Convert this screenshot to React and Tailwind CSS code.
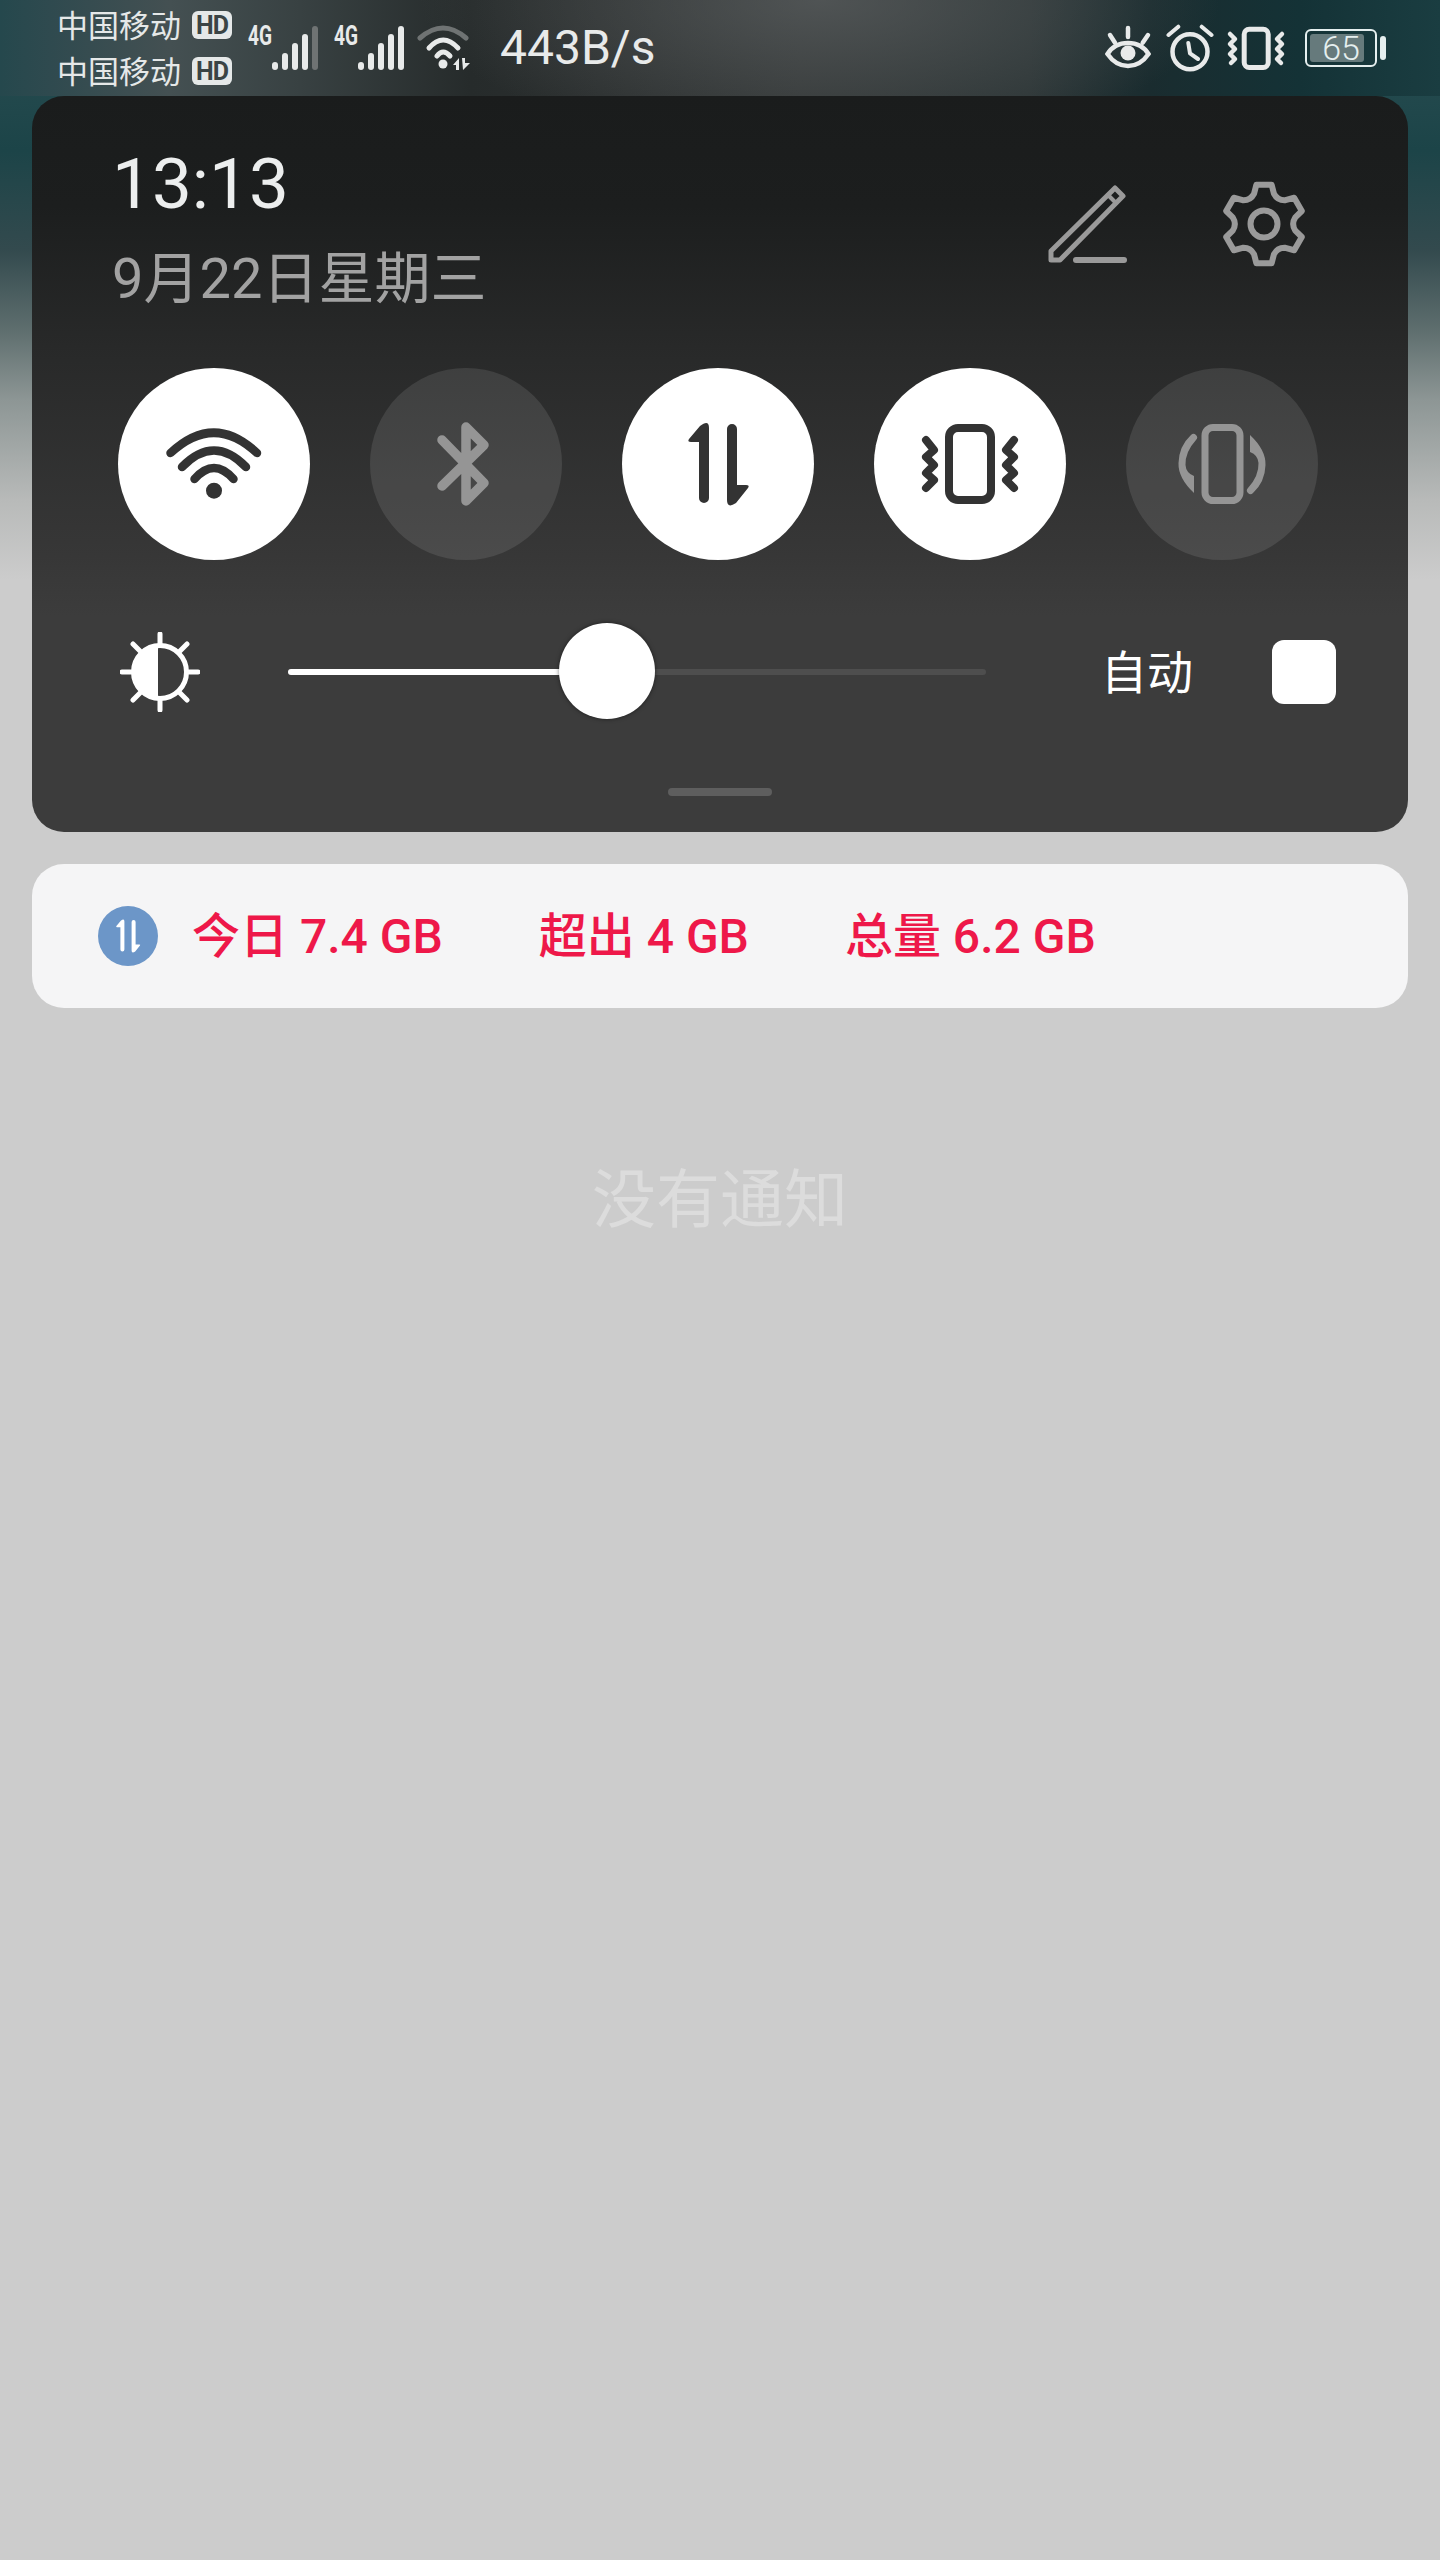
// Notification shade: status bar, quick settings panel, data usage card
const INK = '#333333'
const DIM = '#959595'
const BAR = '#e8eaea'

const SIGNAL_BARS = [[27, 38], [37, 29], [47, 19], [57, 10], [67, 2]]

function SignalIcon({ lastDim }) {
  return (
    <svg width="72" height="48" viewBox="0 0 72 48" className="shrink-0 overflow-visible">
      <text x="0" y="21" fontSize="28" fontWeight="700" fill={BAR} textLength="24" lengthAdjust="spacingAndGlyphs">4G</text>
      {SIGNAL_BARS.map(([x, top], i) => (
        <line
          key={x}
          x1={x}
          x2={x}
          y1={top + 3}
          y2="43"
          stroke={i === 4 && lastDim ? '#6f7373' : BAR}
          strokeWidth="6"
          strokeLinecap="round"
        />
      ))}
    </svg>
  )
}

function WifiSmall() {
  return (
    <svg width="56" height="48" viewBox="0 0 56 48" fill="none" strokeLinecap="round" strokeWidth="5" className="ml-[11px] shrink-0">
      <path d="M3 14 Q26 -6 49 14" stroke="#6f7373" />
      <path d="M12 24 Q26 8 41 24" stroke={BAR} />
      <path d="M20 32 Q26 24 33 32" stroke={BAR} />
      <circle cx="26" cy="40" r="4.5" fill={BAR} />
      <path d="M36 41 L42 34 V46 H39 V41 Z" fill={BAR} />
      <path d="M45 34 H48 V39 H53 L46 46 Z" fill={BAR} />
    </svg>
  )
}

function EyeIcon() {
  return (
    <svg width="52" height="48" viewBox="0 0 52 48" fill="none" stroke={BAR} strokeWidth="4.5" strokeLinecap="round" className="shrink-0">
      <path d="M5.5 30 C11 21 20 19 26 19 C32 19 41 21 46.5 30 C41 38 33 42 26 42 C19 42 11 38 5.5 30 Z" />
      <circle cx="26" cy="29" r="7.5" fill={BAR} stroke="none" />
      <path d="M26 4 V13 M8 11 L13 18.7 M46 11 L40.7 18.7" />
    </svg>
  )
}

function AlarmIcon() {
  return (
    <svg width="48" height="48" viewBox="0 0 48 48" fill="none" stroke={BAR} strokeWidth="4.5" strokeLinecap="round" strokeLinejoin="round" className="ml-3 shrink-0">
      <circle cx="24" cy="27.7" r="17.5" />
      <path d="M22.3 19 L24 29.3 L32 35 M2.5 11 L12.3 2.7 M45.5 11 L35.7 2.7" strokeWidth="4" />
    </svg>
  )
}

function VibrateSmall() {
  return (
    <svg width="60" height="48" viewBox="0 0 60 48" fill="none" stroke={BAR} strokeLinecap="round" strokeLinejoin="round" className="ml-3 shrink-0">
      <rect x="18.2" y="5.2" width="24" height="38.3" rx="5" strokeWidth="5" />
      <path d="M4 10 L9 15 L4 20 L9 25 L4 30 L9 35 L5 39" strokeWidth="4.5" />
      <path d="M56 10 L51 15 L56 20 L51 25 L56 30 L51 35 L55 39" strokeWidth="4.5" />
    </svg>
  )
}

function Battery() {
  return (
    <div className="ml-[19px] flex items-center">
      <div className="relative flex h-[38px] w-[72px] items-center justify-center rounded-[6px] border-2 border-[#e5efef]">
        <div className="absolute left-[3px] top-[3px] h-[28px] w-[54px] rounded-[3px] bg-[#667a7c]" />
        <span className="relative text-[34px] font-light leading-none text-[#e5efef]">65</span>
      </div>
      <div className="ml-[3px] h-[24px] w-[6px] rounded-[3px] bg-[#e5efef]" />
    </div>
  )
}

function HdLine({ children }) {
  return (
    <div className="flex h-[46px] items-center text-[31px] leading-none text-[#e5e8e8]">
      <span className="mt-[3px] w-[135px]">{children}</span>
      <span className="flex h-[28px] w-[40px] items-center justify-center rounded-[6px] bg-[#e5e8e8] text-[25px] font-bold tracking-[-1px] text-[#3a4445]">HD</span>
    </div>
  )
}

function StatusBar() {
  return (
    <div className="flex h-[96px] items-center bg-[radial-gradient(ellipse_400px_150px_at_820px_0,rgba(92,96,97,0.7)_0,rgba(92,96,97,0)_100%),linear-gradient(to_right,#25484d_0,#2f4a4f_50px,#445052_170px,#384142_300px,#262b2b_470px,#2b2f2f_600px,#323636_800px,#2c3536_1030px,#1a2c2f_1150px,#143236_1300px,#1a3d41_1440px)] pl-[57px] pr-[54px]">
      <div className="w-[176px] shrink-0">
        <HdLine>中国移动</HdLine>
        <HdLine>中国移动</HdLine>
      </div>
      <div className="ml-[15px]"><SignalIcon lastDim /></div>
      <div className="ml-[14px]"><SignalIcon /></div>
      <WifiSmall />
      <span className="ml-[27px] text-[48px] leading-none text-[#e8eaea]">443B/s</span>
      <div className="ml-auto flex items-center">
        <EyeIcon />
        <AlarmIcon />
        <VibrateSmall />
        <Battery />
      </div>
    </div>
  )
}

function EditIcon() {
  return (
    <svg width="80" height="80" viewBox="0 0 80 80" fill="none" stroke="#9a9a9a" strokeLinejoin="round" strokeLinecap="round">
      <path d="M68 4 L76 12 L13 76 H4 V67 Z" strokeWidth="5" />
      <path d="M61 11 L69 19" strokeWidth="4" />
      <path d="M29 76 H77" strokeWidth="6" />
    </svg>
  )
}

function polar(deg, r) {
  const a = (deg * Math.PI) / 180
  return `${(43 + r * Math.cos(a)).toFixed(2)} ${(43 + r * Math.sin(a)).toFixed(2)}`
}

function gearPath() {
  let d = ''
  for (let i = 0; i < 6; i++) {
    const a = i * 60 - 90
    d += `${i === 0 ? 'M' : 'L'}${polar(a - 11, 40)} L${polar(a + 11, 40)} L${polar(a + 18, 32)} Q${polar(a + 30, 27)} ${polar(a + 42, 32)} `
  }
  return d + 'Z'
}

function GearIcon() {
  return (
    <svg width="86" height="86" viewBox="0 0 86 86" fill="none" stroke="#9a9a9a" strokeWidth="6" strokeLinejoin="round">
      <path d={gearPath()} />
      <circle cx="43" cy="43" r="13.5" />
    </svg>
  )
}

function WifiBig() {
  return (
    <svg width="192" height="192" viewBox="0 0 192 192" fill="none" stroke={INK} strokeWidth="8.5" strokeLinecap="round">
      <path d="M52.5 85 Q96 44.4 139 85" />
      <path d="M64 99 Q96 66 128 99" />
      <path d="M76.5 111 Q96 89 115.5 111" />
      <circle cx="96" cy="122.7" r="8" fill={INK} stroke="none" />
    </svg>
  )
}

function BluetoothBig() {
  return (
    <svg width="192" height="192" viewBox="0 0 192 192" fill="none" stroke={DIM} strokeWidth="9.5" strokeLinecap="round" strokeLinejoin="round">
      <path d="M72 72 L114 115 L96 133 V59 L114 77 L72 118" />
    </svg>
  )
}

function DataArrows({ className, viewBox = '0 0 192 192', size = 192 }) {
  return (
    <svg width={size} height={size} viewBox={viewBox} className={className}>
      <path d="M87 60 V130 a5 5 0 0 1 -10 0 V74 H69 q-4 0 -2 -3 L78 58 q9 -7 9 2 Z" />
      <path d="M105 61 a5 5 0 0 1 10 0 V117 H124 q4 0 2 3 L114 135 q-9 6 -9 -3 Z" />
    </svg>
  )
}

function VibrateBig() {
  return (
    <svg width="192" height="192" viewBox="0 0 192 192" fill="none" stroke={INK} strokeLinecap="round" strokeLinejoin="round">
      <rect x="75" y="60" width="42" height="72" rx="9" strokeWidth="8" />
      <path d="M52 72 L60 82 L52 89 L60 97 L52 105 L60 112 L52 120" strokeWidth="8" />
      <path d="M140 72 L132 82 L140 89 L132 97 L140 105 L132 112 L140 120" strokeWidth="8" />
    </svg>
  )
}

function RingBig() {
  const arc = 'M65 67 a3.5 3.5 0 0 1 5 5 Q59 84 59.5 97 Q60 105 68 108 V125 Q52 110 52.5 95 Q53 78 65 67 Z'
  return (
    <svg width="192" height="192" viewBox="0 0 192 192" fill="none">
      <rect x="79" y="59.5" width="35" height="73" rx="8" stroke={DIM} strokeWidth="7" />
      <path d={arc} fill={DIM} />
      <path d={arc} fill={DIM} transform="rotate(180 96 96)" />
    </svg>
  )
}

function Toggle({ on, children }) {
  return (
    <div className={on ? 'size-[192px] shrink-0 rounded-full bg-white' : 'size-[192px] shrink-0 rounded-full bg-white/10'}>
      {children}
    </div>
  )
}

function BrightnessIcon() {
  return (
    <svg width="80" height="80" viewBox="0 0 80 80" fill="none" stroke="white" strokeLinecap="round" className="shrink-0">
      <circle cx="40" cy="40" r="26.5" strokeWidth="5" />
      <path d="M38 14 A26 26 0 0 0 38 66 Z" fill="white" stroke="none" />
      <path d="M40 2 V12 M40 68 V78 M2 40 H11 M69 40 H78 M13 12 L20 19 M67 12 L60 19 M13 68 L20 61 M67 68 L60 61" strokeWidth="5" />
    </svg>
  )
}

function Panel() {
  return (
    <div className="mx-8 h-[736px] rounded-[32px] bg-[linear-gradient(to_bottom,#1a1c1c_0,#1c1e1e_110px,#282929_250px,#373737_460px,#3c3c3c_520px)]">
      <div className="flex items-start justify-between pl-[80px] pr-[101px] pt-[44px]">
        <div>
          <div className="h-[88px] text-[71px] leading-[88px] text-[#eceeee]">13:13</div>
          <div className="mt-[19px] h-[64px] text-[56px] leading-[64px] text-[#a2a2a2]">9月22日星期三</div>
        </div>
        <div className="mt-[41px] flex h-[86px] items-center gap-[94px]">
          <EditIcon />
          <GearIcon />
        </div>
      </div>

      <div className="mt-[57px] flex gap-[60px] pl-[86px]">
        <Toggle on><WifiBig /></Toggle>
        <Toggle><BluetoothBig /></Toggle>
        <Toggle on><DataArrows className="fill-[#333333]" /></Toggle>
        <Toggle on><VibrateBig /></Toggle>
        <Toggle><RingBig /></Toggle>
      </div>

      <div className="mt-[64px] flex h-[96px] items-center pl-[88px]">
        <BrightnessIcon />
        <div className="relative ml-[88px] h-[6px] w-[698px] shrink-0 rounded-full bg-[#4e4e4e]">
          <div className="h-[6px] w-[280px] rounded-full bg-white" />
          <div className="absolute left-[271px] top-[-46px] size-[96px] rounded-full bg-white shadow-[0_0_4px_rgba(0,0,0,0.5)]" />
        </div>
        <span className="ml-[115px] mt-[2px] w-[92px] shrink-0 text-[46px] leading-none text-white">自动</span>
        <div className="ml-[79px] size-[64px] shrink-0 rounded-[12px] bg-white" />
      </div>

      <div className="mx-auto mt-[68px] h-2 w-[104px] rounded-full bg-[#5e5e5e]" />
    </div>
  )
}

function UsageCard() {
  return (
    <div className="mx-8 mt-8 flex h-[144px] items-center rounded-[32px] bg-[#f5f5f6] pl-[66px] text-[48px] font-medium leading-none text-[#ee1849]">
      <div className="size-[60px] shrink-0 rounded-full bg-[#6c96c8]">
        <DataArrows className="fill-white" size={60} viewBox="21 21 150 150" />
      </div>
      <span className="ml-[34px] mt-[2px]">今日 7.4 GB</span>
      <span className="ml-[96px] mt-[2px]">超出 4 GB</span>
      <span className="ml-[96px] mt-[2px]">总量 6.2 GB</span>
    </div>
  )
}

export default function App() {
  return (
    <div className="h-[2560px] w-[1440px] overflow-hidden bg-[linear-gradient(to_bottom,#2c5054_0,#1c4448_150px,#334a4e_250px,#5e6e6e_330px,#8d9695_400px,#b8bab9_500px,#cccccc_580px)] font-[Roboto,'Noto_Sans_CJK_SC',sans-serif]">
      <StatusBar />
      <Panel />
      <UsageCard />
      <div className="mt-[153px] text-center text-[64px] leading-[80px] text-[#dcdcdc]">没有通知</div>
    </div>
  )
}
